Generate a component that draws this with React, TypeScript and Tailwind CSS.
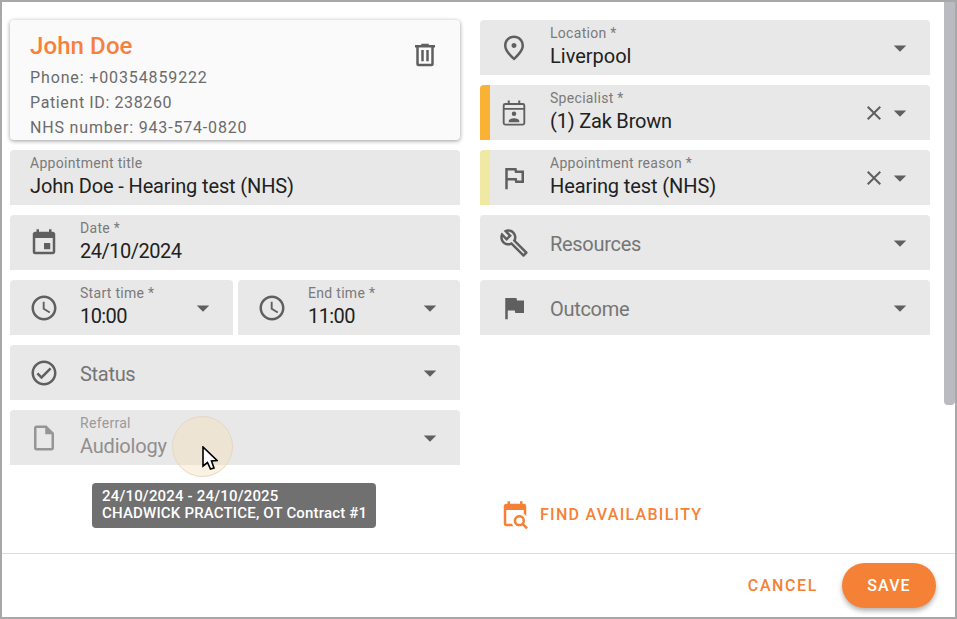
import { ReactNode } from 'react';
import {
  MdAccessTime,
  MdArrowDropDown,
  MdClose,
  MdEvent,
  MdFlag,
  MdOutlineBuild,
  MdOutlineCheckCircle,
  MdOutlineFlag,
  MdOutlineInsertDriveFile,
  MdOutlinePlace,
} from 'react-icons/md';

const iconClass = 'shrink-0 text-[#5f5f5f]';

function TrashIcon() {
  return (
    <svg viewBox="0 0 24 24" className="w-[30px] h-[30px] fill-[#5f5f5f]">
      <path d="M9,3V4H4V6H5V19A2,2 0 0,0 7,21H17A2,2 0 0,0 19,19V6H20V4H15V3H9M7,6H17V19H7V6M9,8V17H11V8H9M13,8V17H15V8H13Z" />
    </svg>
  );
}

function CalendarAccountIcon() {
  return (
    <svg viewBox="0 0 24 24" className="w-[30px] h-[30px] shrink-0 fill-[#5f5f5f]">
      <rect x="3.75" y="4.75" width="16.5" height="16.5" rx="1.2" fill="none" stroke="#5f5f5f" strokeWidth="1.5" />
      <path d="M4 8h16v1.4H4z" />
      <rect x="7" y="2" width="1.6" height="3" />
      <rect x="15.4" y="2" width="1.6" height="3" />
      <circle cx="12" cy="12.6" r="1.8" />
      <path d="M7.8 19.3v-1c0-1.4 2.8-2.1 4.2-2.1s4.2.7 4.2 2.1v1z" />
    </svg>
  );
}

function CalendarSearchIcon() {
  return (
    <svg viewBox="0 0 24 24" className="w-[30px] h-[30px] shrink-0 fill-[#f58137]">
      <path d="M15.5,12C18,12 20,14 20,16.5C20,17.38 19.75,18.21 19.31,18.9L22.39,22L21,23.39L17.88,20.32C17.19,20.75 16.37,21 15.5,21C13,21 11,19 11,16.5C11,14 13,12 15.5,12M15.5,14A2.5,2.5 0 0,0 13,16.5A2.5,2.5 0 0,0 15.5,19A2.5,2.5 0 0,0 18,16.5A2.5,2.5 0 0,0 15.5,14M19,8H5V19H9.5C9.81,19.75 10.25,20.42 10.79,21H5C3.89,21 3,20.1 3,19V5C3,3.89 3.89,3 5,3H6V1H8V3H16V1H18V3H19A2,2 0 0,1 21,5V13.03C20.5,12.22 19.8,11.54 19,11V8Z" />
    </svg>
  );
}

type FieldProps = {
  icon?: ReactNode;
  label?: string;
  value?: string;
  placeholder?: string;
  accent?: string;
  clearable?: boolean;
  arrow?: boolean;
  disabled?: boolean;
  className?: string;
  textClass?: string;
};

function Field({ icon, label, value, placeholder, accent, clearable, arrow = true, disabled, className, textClass }: FieldProps) {
  return (
    <div className={`h-[55px] flex items-stretch bg-[#e8e8e8] rounded-t overflow-hidden ${className ?? ''}`}>
      {accent && <div className={`w-[10px] shrink-0 ${accent}`} />}
      {icon && (
        <div className={`flex items-center justify-center shrink-0 ${accent ? 'w-[60px] pr-[13px]' : 'w-[70px] pr-[3px]'} ${disabled ? 'opacity-60' : ''}`}>
          {icon}
        </div>
      )}
      <div className={`flex-1 min-w-0 flex flex-col ${icon ? '' : 'pl-[20px]'} ${placeholder ? 'justify-center' : 'pt-[3px]'}`}>
        {label && (
          <div className={`text-[14px] leading-[20px] tracking-[0.3px] ${disabled ? 'text-[#9a9a9a]' : 'text-[#7a7a7a]'}`}>{label}</div>
        )}
        {value && (
          <div className={`text-[20px] leading-[26px] whitespace-nowrap ${textClass ?? ''} ${disabled ? 'text-[#8f8f8f]' : 'text-[#212121]'}`}>{value}</div>
        )}
        {placeholder && <div className={`text-[20px] leading-[26px] text-[#757575] pt-[3px] ${textClass ?? ''}`}>{placeholder}</div>}
      </div>
      {clearable && (
        <div className="flex items-center -mr-[1px]">
          <MdClose size={24} className="text-[#5f5f5f]" />
        </div>
      )}
      {arrow && (
        <div className="flex items-center pr-[15px]">
          <MdArrowDropDown size={30} className="text-[#5f5f5f]" />
        </div>
      )}
    </div>
  );
}

export default function App() {
  return (
    <div className="relative w-[957px] h-[619px] border-2 border-[#a8a8a8] bg-white flex flex-col overflow-hidden font-['Roboto',sans-serif]">
      <div className="flex-1 min-h-0 flex">
        <div className="flex-1 flex gap-[20px] pl-[8px] pt-[18px]">
          {/* left column */}
          <div className="w-[450px] flex flex-col gap-[10px]">
            <div className="h-[120px] bg-[#fafafa] rounded shadow-[0_1px_4px_rgba(0,0,0,0.4)] pl-[20px] pr-[20px] flex justify-between overflow-hidden">
              <div>
                <div className="text-[24px] leading-[32px] font-medium text-[#f97f3c] tracking-[0.1px] pt-[10px] h-[42px]">John Doe</div>
                <div className="text-[16px] leading-[25px] text-[#6b6b6b] pt-[3px]">
                  <div className="tracking-[0.87px]">Phone: +00354859222</div>
                  <div className="tracking-[0.62px]">Patient ID: 238260</div>
                  <div className="tracking-[0.83px]">NHS number: 943-574-0820</div>
                </div>
              </div>
              <div className="pt-[20px]">
                <TrashIcon />
              </div>
            </div>
            <Field label="Appointment title" value="John Doe - Hearing test (NHS)" arrow={false} textClass="tracking-[-0.14px]" />
            <Field icon={<MdEvent size={30} className={iconClass} />} label="Date *" value="24/10/2024" arrow={false} textClass="tracking-[-0.5px]" />
            <div className="flex gap-[5px]">
              <Field className="w-[223px]" icon={<MdAccessTime size={30} className={iconClass} />} label="Start time *" value="10:00" textClass="tracking-[-0.6px]" />
              <Field className="flex-1" icon={<MdAccessTime size={30} className={iconClass} />} label="End time *" value="11:00" textClass="tracking-[-0.6px]" />
            </div>
            <Field icon={<MdOutlineCheckCircle size={30} className={iconClass} />} placeholder="Status" textClass="tracking-[-0.3px]" />
            <Field icon={<MdOutlineInsertDriveFile size={30} className={iconClass} />} label="Referral" value="Audiology" disabled textClass="tracking-[-0.2px]" />
          </div>

          {/* right column */}
          <div className="w-[450px] flex flex-col gap-[10px]">
            <Field icon={<MdOutlinePlace size={30} className={iconClass} />} label="Location *" value="Liverpool" />
            <Field icon={<CalendarAccountIcon />} label="Specialist *" value="(1) Zak Brown" accent="bg-[#f9b233]" clearable textClass="tracking-[-0.2px]" />
            <Field icon={<MdOutlineFlag size={30} className={iconClass} />} label="Appointment reason *" value="Hearing test (NHS)" accent="bg-[#f0e9a4]" clearable textClass="tracking-[-0.1px]" />
            <Field icon={<MdOutlineBuild size={30} className={iconClass} />} placeholder="Resources" textClass="tracking-[-0.3px]" />
            <Field icon={<MdFlag size={30} className={iconClass} />} placeholder="Outcome" textClass="tracking-[-0.3px]" />
            <div className="mt-[155px] flex items-center gap-[10px] pl-[20px] text-[16px] font-medium tracking-[1.28px] text-[#f58137]">
              <CalendarSearchIcon />
              <span>FIND AVAILABILITY</span>
            </div>
          </div>
        </div>
        {/* scrollbar */}
        <div className="w-[11px] shrink-0">
          <div className="h-[403px] bg-[#b9bbc0] rounded-b" />
        </div>
      </div>

      <div className="h-[64px] shrink-0 border-t border-[#dcdcdc] flex items-center justify-end gap-[24px] pr-[19px] text-[16px] font-medium">
        <span className="text-[#f58137] tracking-[1.6px]">CANCEL</span>
        <button className="w-[94px] h-[45px] rounded-full bg-[#f58137] text-white tracking-[1.1px] shadow-[0_3px_5px_rgba(0,0,0,0.3)]">SAVE</button>
      </div>

      {/* click highlight and pointer from the recording */}
      <div className="absolute left-[170px] top-[414px] w-[61px] h-[61px] rounded-full bg-[#f5deb3]/40 border border-[#e5d8c5]" />
      <svg viewBox="0 0 16 24" className="absolute left-[200px] top-[444px] w-[16px] h-[24px]">
        <path d="M1 1 L1 20 L5.5 16.5 L8.5 23 L12 22 L9.5 15 L15 14.5 Z" fill="#fff" stroke="#000" strokeWidth="1.6" />
      </svg>

      {/* tooltip */}
      <div className="absolute left-[90px] top-[481px] w-[284px] h-[45px] rounded bg-[#707070] text-white text-[15px] leading-[17px] font-medium tracking-[0.18px] pl-[10px] pt-[5px] whitespace-nowrap">
        <div>24/10/2024 - 24/10/2025</div>
        <div>CHADWICK PRACTICE, OT Contract #1</div>
      </div>
    </div>
  );
}
